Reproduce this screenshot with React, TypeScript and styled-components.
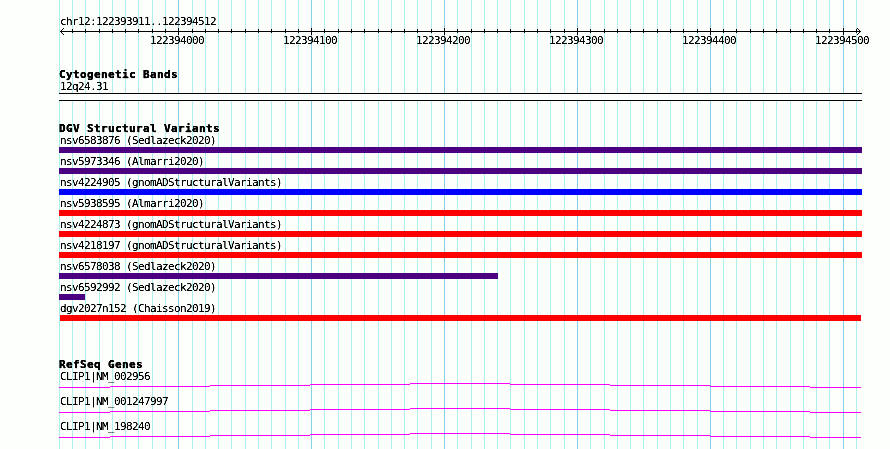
import React from "react";
import styled, { createGlobalStyle } from "styled-components";

const GlobalStyle = createGlobalStyle`
  html, body { margin: 0; padding: 0; background: #fdfffc; }
`;

const Browser = styled.main`
  display: grid;
  width: 890px;
  height: 449px;
  overflow: hidden;
  background: #fdfffc;
  color: #000;
  font-family: "DejaVu Sans Mono", "Liberation Mono", monospace;
  font-size: 11px;
  line-height: 13px;
  white-space: pre;
`;

const GridLines = styled.svg`
  grid-area: 1 / 1;
  display: block;
`;

const Tracks = styled.div`
  grid-area: 1 / 1;
  z-index: 1;
  display: flex;
  flex-direction: column;
  width: 803px;
  padding: 15px 0 0 59px;
`;

const Label = styled.div`
  height: 13px;
  padding-left: 1px;
  letter-spacing: -0.622px;
  filter: url(#crisp-text);
`;

const Title = styled.h2`
  margin: 0;
  height: 12px;
  font-size: 11px;
  font-weight: 700;
  letter-spacing: 0.378px;
  -webkit-text-stroke: 0.25px #000;
  filter: url(#crisp-text);
`;

const Axis = styled.svg`
  display: block;
  width: 803px;
  height: 7px;
`;

const TickLabels = styled.div`
  display: flex;
  height: 13px;
  margin: -1px 0 0 91px;
  filter: url(#crisp-text);
`;

const TickLabel = styled.span`
  flex: 0 0 133px;
  letter-spacing: -0.622px;
`;

const Track = styled.section<{ $before: number }>`
  display: flex;
  flex-direction: column;
  margin-top: ${(p) => p.$before}px;
`;

const Band = styled.div`
  box-sizing: border-box;
  height: 8px;
  background: #fdfffc;
  border: solid #000;
  border-width: 1px 0;
`;

const Features = styled.div<{ $gap: number }>`
  display: flex;
  flex-direction: column;
  gap: ${(p) => p.$gap}px;
`;

const Bar = styled.div<{ $color: string; $start: number; $end: number }>`
  height: 6px;
  margin-left: ${(p) => p.$start}px;
  width: ${(p) => p.$end - p.$start}px;
  background: ${(p) => p.$color};
`;

const Intron = styled.svg`
  display: block;
  width: 803px;
  height: 5px;
`;

const axisStart = 122393911;
const pixelsPerBase = 800 / 602;

const ticks = Array.from({ length: 61 }, (_, i) => {
  const base = 122393910 + i * 10;
  return {
    x: Math.max(0, Math.round(1 + (base - axisStart) * pixelsPerBase)),
    major: base % 100 === 0,
  };
});

const INDIGO = "#4b0082";
const BLUE = "#0000ff";
const RED = "#ff0000";

const variants = [
  { name: "nsv6583876 (Sedlazeck2020)", color: INDIGO, start: 0, end: 803 },
  { name: "nsv5973346 (Almarri2020)", color: INDIGO, start: 0, end: 803 },
  { name: "nsv4224905 (gnomADStructuralVariants)", color: BLUE, start: 0, end: 803 },
  { name: "nsv5938595 (Almarri2020)", color: RED, start: 0, end: 803 },
  { name: "nsv4224873 (gnomADStructuralVariants)", color: RED, start: 0, end: 803 },
  { name: "nsv4218197 (gnomADStructuralVariants)", color: RED, start: 0, end: 803 },
  { name: "nsv6578038 (Sedlazeck2020)", color: INDIGO, start: 0, end: 439 },
  { name: "nsv6592992 (Sedlazeck2020)", color: INDIGO, start: 0, end: 26 },
  { name: "dgv2027n152 (Chaisson2019)", color: RED, start: 1, end: 802 },
];

const genes = ["CLIP1|NM_002956", "CLIP1|NM_001247997", "CLIP1|NM_198240"];

const intronSteps = [0, 51, 151, 251, 351, 451, 551, 651, 751, 802];

export default function App() {
  return (
    <>
      <GlobalStyle />
      <Browser>
        <GridLines width="890" height="449" shapeRendering="crispEdges">
          <defs>
            {/* Hard-edged glyphs, like a bitmap font */}
            <filter id="crisp-text" x="-0.02" y="-0.2" width="1.04" height="1.4" colorInterpolationFilters="sRGB">
              <feComponentTransfer>
                <feFuncA type="linear" slope="1.9" intercept="-0.3" />
              </feComponentTransfer>
            </filter>
          </defs>
          {ticks.map((t) => (
            <rect key={t.x} x={59 + t.x} y="0" width="1" height="449" fill={t.major ? "#87ceeb" : "#afeeee"} />
          ))}
        </GridLines>
        <Tracks>
          <Label>chr12:122393911..122394512</Label>
          <Axis viewBox="0 0 803 7" shapeRendering="crispEdges">
            <rect x="1" y="3" width="801" height="1" />
            {ticks.slice(1).map((t) => (
              <rect key={t.x} x={t.x} y={t.major ? 0 : 1} width="1" height={t.major ? 7 : 4} />
            ))}
            {[1, 2, 3].map((d) => (
              <React.Fragment key={d}>
                <rect x={1 + d} y={3 - d} width="1" height="1" />
                <rect x={1 + d} y={3 + d} width="1" height="1" />
                <rect x={801 - d} y={3 - d} width="1" height="1" />
                <rect x={801 - d} y={3 + d} width="1" height="1" />
              </React.Fragment>
            ))}
          </Axis>
          <TickLabels>
            {[0, 1, 2, 3, 4, 5].map((n) => (
              <TickLabel key={n}>{122394000 + n * 100}</TickLabel>
            ))}
          </TickLabels>

          <Track $before={21}>
            <Title>Cytogenetic Bands</Title>
            <Label>12q24.31</Label>
            <Band />
          </Track>

          <Track $before={21}>
            <Title>DGV Structural Variants</Title>
            <Features $gap={2}>
              {variants.map((v) => (
                <div key={v.name}>
                  <Label>{v.name}</Label>
                  <Bar $color={v.color} $start={v.start} $end={v.end} />
                </div>
              ))}
            </Features>
          </Track>

          <Track $before={37}>
            <Title>RefSeq Genes</Title>
            <Features $gap={7}>
              {genes.map((g) => (
                <div key={g}>
                  <Label>{g}</Label>
                  <Intron viewBox="0 0 803 5" shapeRendering="crispEdges">
                    {intronSteps.slice(0, -1).map((x, i) => (
                      <rect key={x} x={x} y={Math.abs(i - 4)} width={intronSteps[i + 1] - x} height="1" fill="#ff00ff" />
                    ))}
                  </Intron>
                </div>
              ))}
            </Features>
          </Track>
        </Tracks>
      </Browser>
    </>
  );
}
